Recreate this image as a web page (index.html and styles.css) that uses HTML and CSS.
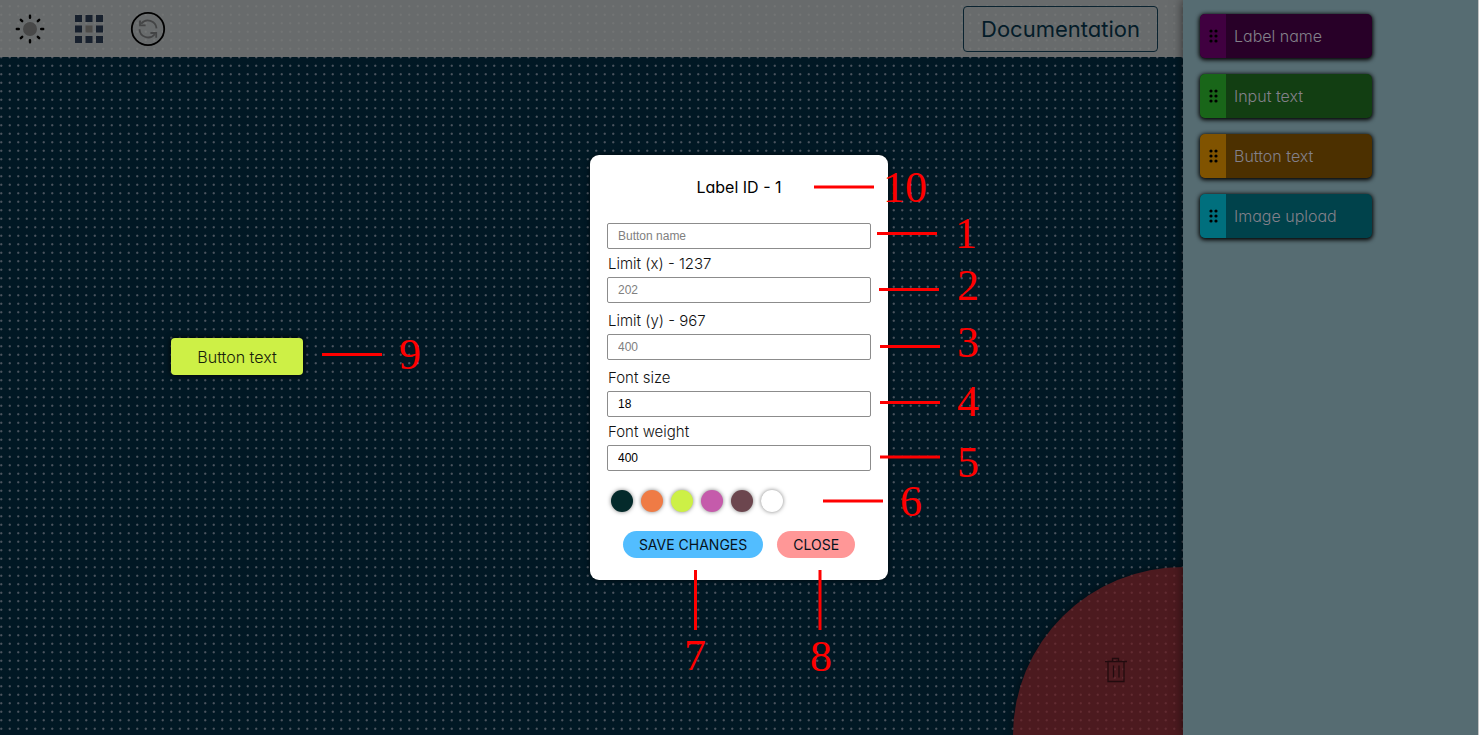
FILE: index.html
```html
<!DOCTYPE html>
<html lang="en">
<head>
<meta charset="utf-8">
<title>Form builder</title>
<link rel="stylesheet" href="styles.css">
</head>
<body>
<div class="app">
  <main class="canvas">
    <header class="toolbar">
      <div class="tools">
        <button class="tool" type="button" aria-label="Toggle theme">
          <svg width="30" height="30" viewBox="0 0 30 30">
            <circle cx="15" cy="15" r="7" fill="#484848"/>
            <g stroke="#000" stroke-width="2.4" stroke-linecap="round">
              <path d="M15 1.8v2M15 26.2v2M1.8 15h2M26.2 15h2M5.8 5.8l1.4 1.4M22.8 22.8l1.4 1.4M5.8 24.2l1.4-1.4M22.8 7.2l1.4-1.4"/>
            </g>
          </svg>
        </button>
        <button class="tool" type="button" aria-label="Toggle grid">
          <svg width="28" height="28" viewBox="0 0 28 28" fill="#18212e">
            <path d="M0 0h7v7H0zM10.500 0h7v7h-7zM21 0h7v7h-7zM0 10.500h7v7H0zM21 10.500h7v7h-7zM0 21h7v7H0zM10.500 21h7v7h-7zM21 21h7v7h-7z"/>
            <path fill="#4c4b49" d="M10.500 10.500h7v7h-7z"/>
          </svg>
        </button>
        <button class="tool" type="button" aria-label="Reset">
          <svg width="36" height="36" viewBox="0 0 36 36" fill="none">
            <circle cx="18" cy="18" r="16.200" stroke="#000" stroke-width="1.800"/>
            <g stroke="#434445" stroke-width="1.800">
              <path d="M11.200 12.800A8.600 8.600 0 0 1 26.500 17.400M9.500 18.200A8.600 8.600 0 0 0 24.800 23.200"/>
              <path d="M10 9.500v4.800h5.600M26.200 26.800v-4.800h-5.800"/>
            </g>
          </svg>
        </button>
      </div>
      <a class="docs" href="#documentation">Documentation</a>
    </header>
    <button class="placed-button" type="button">Button text</button>
    <div class="trash">
      <svg width="22" height="26" viewBox="0 0 22 26" fill="none" stroke="#220b0e" stroke-width="1.300">
        <path d="M0 4.500h22M7.500 4.500v-3h6v3M3 4.500v20h16v-20M8.500 8.500v12M14 8.500v12"/>
      </svg>
    </div>
  </main>
  <aside class="sidebar">
    <div class="item item-label"><span class="grip"><svg width="9" height="14" viewBox="0 0 9 14"><use href="#grip-dots"/></svg></span><span class="item-text">Label name</span></div>
    <div class="item item-input"><span class="grip"><svg width="9" height="14" viewBox="0 0 9 14"><use href="#grip-dots"/></svg></span><span class="item-text">Input text</span></div>
    <div class="item item-button"><span class="grip"><svg width="9" height="14" viewBox="0 0 9 14"><use href="#grip-dots"/></svg></span><span class="item-text">Button text</span></div>
    <div class="item item-image"><span class="grip"><svg width="9" height="14" viewBox="0 0 9 14"><use href="#grip-dots"/></svg></span><span class="item-text">Image upload</span></div>
  </aside>

  <div class="overlay">
    <form class="modal">
      <h1 class="modal-title">Label ID - 1</h1>
      <input class="text-box" type="text" placeholder="Button name" aria-label="Button name">
      <div class="field field-spaced">
        <label for="pos-x">Limit (x) - 1237</label>
        <input class="text-box" id="pos-x" type="text" placeholder="202">
      </div>
      <div class="field field-spaced">
        <label for="pos-y">Limit (y) - 967</label>
        <input class="text-box" id="pos-y" type="text" placeholder="400">
      </div>
      <div class="field">
        <label for="font-size">Font size</label>
        <input class="text-box" id="font-size" type="text" value="18">
      </div>
      <div class="field">
        <label for="font-weight">Font weight</label>
        <input class="text-box" id="font-weight" type="text" value="400">
      </div>
      <div class="swatches">
        <button class="swatch swatch-dark" type="button" aria-label="Dark green"></button>
        <button class="swatch swatch-orange" type="button" aria-label="Orange"></button>
        <button class="swatch swatch-lime" type="button" aria-label="Lime"></button>
        <button class="swatch swatch-pink" type="button" aria-label="Pink"></button>
        <button class="swatch swatch-brown" type="button" aria-label="Brown"></button>
        <button class="swatch swatch-white" type="button" aria-label="White"></button>
      </div>
      <div class="actions">
        <button class="action save" type="button">SAVE CHANGES</button>
        <button class="action close" type="button">CLOSE</button>
      </div>
    </form>
  </div>

  <svg class="callouts" width="1478" height="735" viewBox="0 0 1478 735">
    <path class="callout-line" d="M814 187h60M877 233.500h60M879 289.500h60M880 346.500h60M880 402.500h60M880 457h60M823 501h60M695.500 570v60M820 570v60M322 354.500h60"/>
    <g class="callout-number">
      <text x="905" y="202">10</text>
      <text x="966" y="248">1</text>
      <text x="968" y="300">2</text>
      <text x="968" y="357">3</text>
      <text x="968" y="416">4</text>
      <text x="968" y="477">5</text>
      <text x="911" y="516">6</text>
      <text x="695" y="670">7</text>
      <text x="821" y="671">8</text>
      <text x="410" y="369">9</text>
    </g>
    <defs>
      <g id="grip-dots" fill="#000">
        <circle cx="2" cy="2" r="1.600"/><circle cx="7" cy="2" r="1.600"/>
        <circle cx="2" cy="7" r="1.600"/><circle cx="7" cy="7" r="1.600"/>
        <circle cx="2" cy="12" r="1.600"/><circle cx="7" cy="12" r="1.600"/>
      </g>
    </defs>
  </svg>
</div>
</body>
</html>
```
FILE: styles.css
```css
* {
  box-sizing: border-box;
}

body {
  margin: 0;
  border-right: 1px solid #c4c4c4;
  font-family: Inter, "Open Sans", sans-serif;
  font-feature-settings: "cv11";
  font-weight: 300;
}

button {
  border: 0;
  padding: 0;
  font: inherit;
  font-feature-settings: inherit;
}

.app {
  position: relative;
  display: flex;
  min-height: 100vh;
  overflow: hidden;
}

.canvas {
  --dot: #4b545f 0, #4b545f 30%, transparent 80%;
  position: relative;
  flex: 1;
  background-color: #011824;
  background-image:
    radial-gradient(2px 2px at 25% 25%, var(--dot)),
    radial-gradient(2px 2px at 75% 25%, var(--dot)),
    radial-gradient(2px 2px at 25% 75%, var(--dot)),
    radial-gradient(2px 2px at 75% 75%, var(--dot));
  background-size: 17px 17px;
  background-position: -3px 2px;
}

.toolbar {
  display: flex;
  align-items: center;
  justify-content: space-between;
  height: 57px;
  padding: 0 25px 0 12px;
  background: rgba(121, 121, 120, 0.86);
}

.tools {
  display: flex;
  align-items: center;
  gap: 23px;
}

.tool {
  display: flex;
  align-items: center;
  justify-content: center;
  width: 36px;
  height: 36px;
  background: none;
}

.docs {
  display: flex;
  align-items: center;
  justify-content: center;
  width: 195px;
  height: 46px;
  border: 1px solid #0a2330;
  border-radius: 4px;
  color: #041c29;
  font-size: 22px;
  font-weight: 400;
  text-decoration: none;
}

.placed-button {
  position: absolute;
  top: 338px;
  left: 171px;
  width: 132px;
  height: 37px;
  border-radius: 4px;
  background: #cdf046;
  box-shadow: 0 0 6px #000;
  color: #17200a;
  font-size: 16px;
}

.trash {
  position: absolute;
  right: 0;
  bottom: 0;
  display: flex;
  align-items: center;
  justify-content: center;
  width: 170px;
  height: 168px;
  padding: 38px 0 0 36px;
  border-radius: 100% 0 0 0;
  background: rgba(108, 27, 30, 0.7);
  box-shadow: 0 0 8px rgba(0, 0, 0, 0.5);
}

.sidebar {
  position: relative;
  display: flex;
  flex-direction: column;
  gap: 16px;
  width: 295px;
  padding: 14px 17px;
  background: #566c72;
  box-shadow: 0 0 10px rgba(0, 0, 0, 0.6);
}

.item {
  display: flex;
  width: 172px;
  height: 44px;
  overflow: hidden;
  border-radius: 5px;
  box-shadow: 0 1px 4px 1px #000;
  color: #83808a;
  font-size: 16px;
}

.grip {
  display: flex;
  align-items: center;
  justify-content: center;
  width: 26px;
}

.item-text {
  align-self: center;
  padding-left: 8px;
}

.item-label { background: #280028; }
.item-label .grip { background: #400040; }
.item-input { background: #123e12; }
.item-input .grip { background: #196619; }
.item-button { background: #4c3000; }
.item-button .grip { background: #805300; }
.item-image { background: #00424b; }
.item-image .grip { background: #006f7d; }

.overlay {
  position: absolute;
  inset: 0;
  display: flex;
  align-items: center;
  justify-content: center;
}

.modal {
  width: 298px;
  padding: 20px 17px 22px;
  border-radius: 9px;
  background: #fff;
  box-shadow: 0 0 5px rgba(0, 0, 0, 0.6);
}

.modal-title {
  margin: 0 0 23px;
  font-size: 16px;
  font-weight: 400;
  line-height: 25px;
  text-align: center;
}

.text-box {
  display: block;
  width: 265px;
  max-width: 100%;
  height: 26px;
  padding: 0 10px;
  border: 1px solid #8c8c8c;
  border-radius: 2px;
  background: #fff;
  color: #000;
  font-family: "Liberation Sans", Arial, sans-serif;
  font-size: 12px;
  font-weight: 400;
}

.text-box::placeholder {
  color: #808080;
}

.field {
  margin-top: 4px;
}

.field-spaced {
  margin-bottom: 7px;
}

.field label {
  display: block;
  margin-bottom: 2px;
  padding-left: 1px;
  color: #111;
  font-size: 15px;
  line-height: 22px;
}

.swatches {
  display: flex;
  gap: 8px;
  margin: 19px 4px;
}

.swatch {
  width: 22px;
  height: 22px;
  border-radius: 50%;
  box-shadow: 0 0 4px rgba(0, 0, 0, 0.5);
}

.swatch-dark { background: #042a2b; }
.swatch-orange { background: #ef7b45; }
.swatch-lime { background: #cdf046; }
.swatch-pink { background: #c55bab; }
.swatch-brown { background: #6c464e; }
.swatch-white { background: #fff; }

.actions {
  display: flex;
  justify-content: center;
  gap: 14px;
}

.action {
  height: 27px;
  padding: 0 16px;
  border-radius: 14px;
  color: #06121c;
  font-size: 14px;
  font-weight: 400;
}

.save { background: #52bdff; }
.close { background: #ff9797; }

.callouts {
  position: absolute;
  top: 0;
  left: 0;
  pointer-events: none;
}

.callout-line {
  stroke: #f00;
  stroke-width: 3px;
}

.callout-number {
  fill: #f00;
  font-family: "Liberation Serif", serif;
  font-size: 44px;
  font-weight: 400;
  text-anchor: middle;
}
```
